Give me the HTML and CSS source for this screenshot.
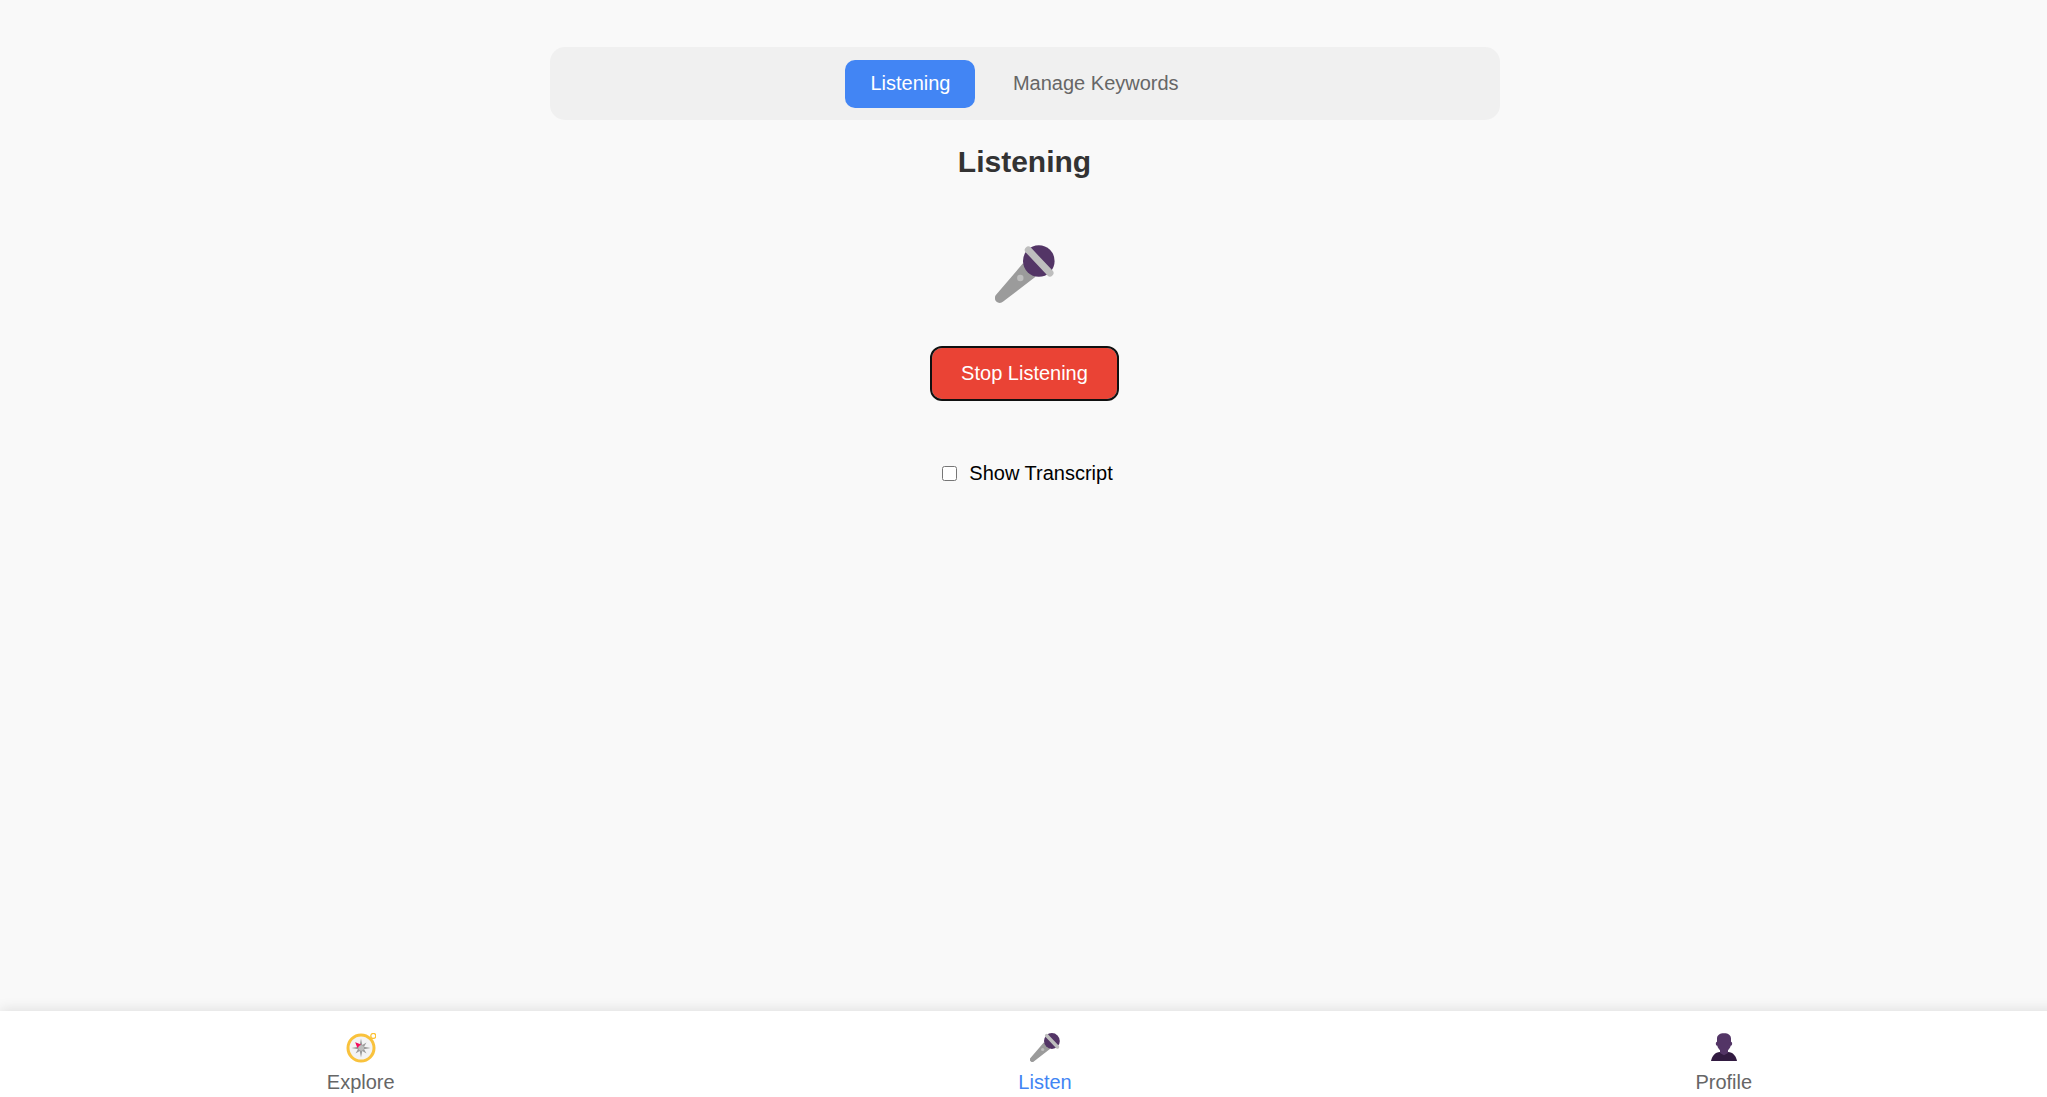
FILE: index.html
```
<!DOCTYPE html>
<html lang="en">
	<head>
		<meta charset="UTF-8">
		<title>Listening</title>
		<link rel="stylesheet" href="styles.css">
	</head>
	<body>
		<!-- shared microphone drawing -->
		<svg class="defs" width="0" height="0">
			<symbol id="mic" viewBox="0 0 60 60">
				<path d="M28 18.300L1.300 49.500a4.900 4.900 0 0 0 6.900 7L40.500 31.700z" fill="#9b9b9b"/>
				<circle cx="43.8" cy="16" r="15.8" fill="#533566"/>
				<path d="M33.3 5L55 28" stroke="#bebebe" stroke-width="7" stroke-linecap="round"/>
				<circle cx="25.3" cy="33" r="3.2" fill="#bebebe"/>
			</symbol>
		</svg>
		<div class="container">
			<div class="tabs">
				<button class="tab active">Listening</button>
				<button class="tab">Manage Keywords</button>
			</div>
			<h1>Listening</h1>
			<svg class="mic"><use href="#mic"/></svg>
			<button class="stop">Stop Listening</button>
			<label class="transcript">
				<input type="checkbox">
				<span>Show Transcript</span>
			</label>
		</div>
		<nav class="bottom-nav">
			<a class="nav-item">
				<svg class="icon" viewBox="0 0 30 30">
					<circle cx="27.3" cy="2.900" r="2.5" fill="none" stroke="#fcc133" stroke-width="1.3"/>
					<circle cx="15" cy="15" r="13" fill="#f3f3f4" stroke="#f9c23c" stroke-width="3"/>
					<path d="M15 5.500l1.300 6.500 4.200-2.500-2.500 4.200 6.500 1.300-6.500 1.300 2.500 4.200-4.200-2.500-1.300 6.500-1.300-6.500-4.200 2.500 2.500-4.200-6.500-1.300 6.500-1.300-2.500-4.200 4.200 2.500z" fill="#9b9b9b"/>
					<path d="M9.2 9.200l5.800 2.200-3.600 3.600z" fill="#f70a5d"/>
					<circle cx="15.2" cy="15" r="2.8" fill="#bebebe"/>
				</svg>
				<span>Explore</span>
			</a>
			<a class="nav-item active">
				<svg class="icon"><use href="#mic"/></svg>
				<span>Listen</span>
			</a>
			<a class="nav-item">
				<svg class="icon" viewBox="0 0 30 30">
					<path d="M2 28c1-5 4-9 9-9h8c5 0 8 4 9 9z" fill="#321b41"/>
					<path d="M15 .2c-4.400 0-7 2-7 5.400v3.200c-1.600 0-1.600 4 .3 4 .6 2 1.500 3.400 2.700 4.400V20l4 2.200 4-2.200v-2.800c1.200-1 2.100-2.400 2.700-4.400 1.900 0 1.900-4 .3-4V5.600c0-3.400-2.600-5.400-7-5.400z" fill="#533566"/>
				</svg>
				<span>Profile</span>
			</a>
		</nav>
	</body>
</html>
```
FILE: styles.css
```
body{
	margin: 0;
	height: 1097px;
	display: flex;
	flex-direction: column;
	background: #f9f9f9;
	font-family: Arial, "Liberation Sans", sans-serif;
	font-size: 20px;
	overflow: hidden;
}
button{
	font-family: inherit;
	font-size: 20px;
	border: none;
}
.defs{
	display: block;
	flex: none;
}
.container{
	width: 949px;
	flex: 1;
	margin: 0 auto;
	padding: 47px 0 0 2px;
	display: flex;
	flex-direction: column;
	align-items: center;
}
.tabs{
	width: 950px;
	height: 73px;
	display: flex;
	justify-content: center;
	align-items: center;
	gap: 12.5px;
	background: #f0f0f0;
	border-radius: 15px;
}
.tab{
	height: 48px;
	padding: 0 25px;
	background: none;
	color: #666;
	border-radius: 10px;
}
.tab.active{
	background: #4285f4;
	color: #fff;
}
h1{
	margin: 25px 0 0;
	font-size: 30px;
	line-height: 34px;
	color: #333;
}
.mic{
	width: 60px;
	height: 60px;
	margin-top: 66px;
}
.stop{
	width: 185px;
	height: 51px;
	margin-top: 43px;
	background: #ea4335;
	color: #fff;
	border-radius: 10px;
	outline: 2px solid #101010;
}
.transcript{
	margin-top: 63px;
	padding-left: 6px;
	display: flex;
	align-items: center;
	gap: 12px;
	line-height: 23px;
}
.transcript input{
	width: 15px;
	height: 15px;
	margin: 0;
}
.bottom-nav{
	box-sizing: border-box;
	width: 2079px;
	height: 86px;
	padding: 22px 15px 0;
	display: flex;
	justify-content: space-around;
	background: #fff;
	box-shadow: 0 -2px 12px rgba(0,0,0,.1);
}
.nav-item{
	display: flex;
	flex-direction: column;
	align-items: center;
	color: #666;
	line-height: 23px;
}
.nav-item.active{
	color: #4285f4;
}
.icon{
	width: 30px;
	height: 30px;
	margin-bottom: 8px;
}
```
